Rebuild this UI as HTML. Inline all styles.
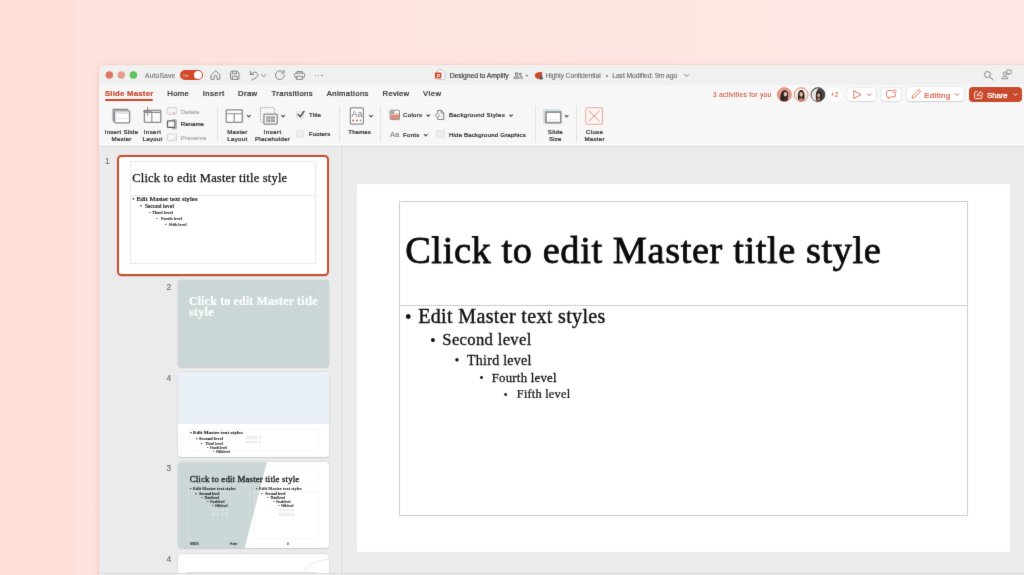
<!DOCTYPE html>
<html lang="en">
<head>
<meta charset="utf-8">
<title>Slide Master</title>
<style>
*{box-sizing:border-box;margin:0;padding:0}
html,body{width:1024px;height:575px;overflow:hidden}
#app{position:absolute;left:0;top:0;width:1024px;height:575px;overflow:hidden}
#fx{position:absolute;left:0;top:0;width:1100px;height:640px;filter:url(#soft)}
body{position:relative;font-family:"Liberation Sans",sans-serif;color:#2b2b2b;
 background:linear-gradient(90deg,#fee0d7 0,#fee0d8 75px,#fee2db 77px,#fee4df 50%,#fee8e8 100%);}
.a{position:absolute;display:block}
.t{position:absolute;white-space:nowrap;line-height:1;display:block;-webkit-text-stroke:0.22px}
.t:before{content:"";display:inline-block;width:0;height:60px}
</style>
</head>
<body>
<svg width="0" height="0" style="position:absolute" aria-hidden="true"><defs><filter id="soft" x="0" y="0" width="100%" height="100%" color-interpolation-filters="sRGB"><feConvolveMatrix order="3" kernelMatrix="0.0074 0.0713 0.0074 0.0713 0.6853 0.0713 0.0074 0.0713 0.0074" edgeMode="duplicate" preserveAlpha="false"/></filter></defs></svg>
<div id="app"><div id="fx">
<div class="a" style="left:98.60px;top:65.00px;width:940.00px;height:530.00px;background:#ebebeb;border-radius:6px 0 0 0;box-shadow:0 0 0 0.5px rgba(160,80,60,.10),0 1px 7px rgba(200,90,60,.16);"></div>
<div class="a" style="left:98.60px;top:65.00px;width:940.00px;height:20.20px;background:#f1f0f0;border-radius:6px 0 0 0;"></div>
<div class="a" style="left:98.60px;top:85.20px;width:940.00px;height:62.20px;background:#f8f7f7;border-bottom:1px solid #dcdbdb;"></div>
<div class="a" style="left:339.60px;top:147.40px;width:1.20px;height:430.00px;background:#f3f3f3;"></div>
<div class="a" style="left:340.80px;top:147.40px;width:0.90px;height:430.00px;background:#dddddd;"></div>
<svg class="a" style="left:104px;top:70px;" width="10" height="10" viewBox="0 0 10 10" fill="none"><g transform="translate(0.80 0.50)"><circle cx="4.5" cy="4.5" r="3.75" fill="#dd7660"/></g></svg>
<svg class="a" style="left:116px;top:70px;" width="10" height="10" viewBox="0 0 10 10" fill="none"><g transform="translate(0.80 0.50)"><circle cx="4.5" cy="4.5" r="3.75" fill="#e69f8b"/></g></svg>
<svg class="a" style="left:128px;top:70px;" width="10" height="10" viewBox="0 0 10 10" fill="none"><g transform="translate(0.90 0.50)"><circle cx="4.5" cy="4.5" r="3.75" fill="#5dc25b"/></g></svg>
<div class="t" style="left:145.10px;top:18.00px;font-size:6.80px;color:#707070;letter-spacing:0.102px;-webkit-text-stroke:0.100px;">AutoSave</div>
<div class="a" style="left:179.50px;top:70.40px;width:23.20px;height:9.60px;background:#d1492a;border-radius:5px;"></div>
<div class="a" style="left:193.90px;top:71.20px;width:8.00px;height:8.00px;background:#fff;border-radius:50%;"></div>
<div class="t" style="left:183.40px;top:17.00px;font-size:16.80px;color:#fbe9e4;transform-origin:0 60px;transform:scale(0.25);-webkit-text-stroke:0.000px;">On</div>
<div class="t" style="left:104.90px;top:36.00px;font-size:7.70px;color:#c8472b;font-family:'Liberation Sans',sans-serif;font-weight:700;letter-spacing:0.276px;">Slide Master</div>
<div class="a" style="left:104.90px;top:99.20px;width:48.40px;height:2.10px;background:#c8472b;border-radius:1px;"></div>
<div class="t" style="left:167.20px;top:36.00px;font-size:7.70px;color:#262626;letter-spacing:0.387px;">Home</div>
<div class="t" style="left:202.70px;top:36.00px;font-size:7.70px;color:#262626;letter-spacing:0.468px;">Insert</div>
<div class="t" style="left:237.90px;top:36.00px;font-size:7.70px;color:#262626;letter-spacing:0.444px;">Draw</div>
<div class="t" style="left:271.60px;top:36.00px;font-size:7.70px;color:#262626;letter-spacing:0.363px;">Transitions</div>
<div class="t" style="left:326.70px;top:36.00px;font-size:7.70px;color:#262626;letter-spacing:0.412px;">Animations</div>
<div class="t" style="left:382.60px;top:36.00px;font-size:7.70px;color:#262626;letter-spacing:0.231px;">Review</div>
<div class="t" style="left:423.00px;top:36.00px;font-size:7.70px;color:#262626;letter-spacing:0.483px;">View</div>
<div class="a" style="left:356.60px;top:183.90px;width:653.80px;height:368.50px;background:#fff;border-radius:1.5px;"></div>
<div class="a" style="left:399.20px;top:201.30px;width:569.20px;height:315.20px;border:1px solid #e6e6e6;"></div>
<div class="a" style="left:399.20px;top:201.30px;width:569.20px;height:315.20px;border:1px dotted #b2b2b2;"></div>
<div class="a" style="left:399.20px;top:304.90px;width:569.20px;height:1.00px;border-top:1px solid #e6e6e6;"></div>
<div class="a" style="left:399.20px;top:304.90px;width:569.20px;height:1.00px;border-top:1px dotted #b2b2b2;"></div>
<div class="t" style="left:405.20px;top:203.00px;font-size:38.35px;color:#0a0a0a;font-family:'Liberation Serif',serif;font-weight:400;letter-spacing:0.614px;-webkit-text-stroke:0.767px;">Click to edit Master title style</div>
<div class="t" style="left:104.70px;top:74.00px;font-size:6.10px;color:#2a2a2a;letter-spacing:0.262px;">Insert Slide</div>
<div class="t" style="left:111.40px;top:81.00px;font-size:6.10px;color:#2a2a2a;letter-spacing:0.271px;">Master</div>
<div class="t" style="left:143.75px;top:74.00px;font-size:6.10px;color:#2a2a2a;letter-spacing:0.409px;">Insert</div>
<div class="t" style="left:142.55px;top:81.00px;font-size:6.10px;color:#2a2a2a;letter-spacing:0.277px;">Layout</div>
<div class="t" style="left:180.70px;top:54.00px;font-size:6.10px;color:#a9a9a9;letter-spacing:0.213px;">Delete</div>
<div class="t" style="left:180.70px;top:66.00px;font-size:6.10px;color:#2a2a2a;letter-spacing:0.049px;">Rename</div>
<div class="t" style="left:180.70px;top:80.00px;font-size:6.10px;color:#a9a9a9;letter-spacing:0.184px;">Preserve</div>
<div class="a" style="left:217.20px;top:106.00px;width:1.00px;height:35.50px;background:#e5e4e4;"></div>
<div class="t" style="left:227.30px;top:74.00px;font-size:6.10px;color:#2a2a2a;letter-spacing:0.251px;">Master</div>
<div class="t" style="left:227.30px;top:81.00px;font-size:6.10px;color:#2a2a2a;letter-spacing:0.317px;">Layout</div>
<div class="t" style="left:263.85px;top:74.00px;font-size:6.10px;color:#2a2a2a;letter-spacing:0.409px;">Insert</div>
<div class="t" style="left:254.95px;top:81.00px;font-size:6.10px;color:#2a2a2a;letter-spacing:0.288px;">Placeholder</div>
<div class="t" style="left:309.10px;top:57.00px;font-size:6.10px;color:#2a2a2a;letter-spacing:0.101px;">Title</div>
<div class="t" style="left:309.10px;top:76.00px;font-size:6.10px;color:#2a2a2a;letter-spacing:0.070px;">Footers</div>
<div class="a" style="left:339.00px;top:106.00px;width:1.00px;height:35.50px;background:#e5e4e4;"></div>
<div class="t" style="left:348.30px;top:74.00px;font-size:6.10px;color:#2a2a2a;letter-spacing:0.113px;">Themes</div>
<div class="a" style="left:380.00px;top:106.00px;width:1.00px;height:35.50px;background:#e5e4e4;"></div>
<div class="t" style="left:403.00px;top:57.00px;font-size:6.10px;color:#2a2a2a;letter-spacing:0.295px;">Colors</div>
<div class="t" style="left:449.00px;top:57.00px;font-size:6.10px;color:#2a2a2a;letter-spacing:0.309px;">Background Styles</div>
<div class="t" style="left:389.90px;top:77.00px;font-size:7.69px;color:#8a8a8a;">Aa</div>
<div class="t" style="left:403.00px;top:77.00px;font-size:6.10px;color:#2a2a2a;letter-spacing:0.286px;">Fonts</div>
<div class="t" style="left:449.00px;top:77.00px;font-size:6.10px;color:#2a2a2a;letter-spacing:0.174px;">Hide Background Graphics</div>
<div class="a" style="left:534.50px;top:106.00px;width:1.00px;height:35.50px;background:#e5e4e4;"></div>
<div class="t" style="left:547.85px;top:74.00px;font-size:6.10px;color:#2a2a2a;letter-spacing:0.334px;">Slide</div>
<div class="t" style="left:549.10px;top:81.00px;font-size:6.10px;color:#2a2a2a;letter-spacing:0.178px;">Size</div>
<div class="a" style="left:576.00px;top:106.00px;width:1.00px;height:35.50px;background:#e5e4e4;"></div>
<div class="t" style="left:586.10px;top:74.00px;font-size:6.10px;color:#2a2a2a;letter-spacing:0.276px;">Close</div>
<div class="t" style="left:584.40px;top:81.00px;font-size:6.10px;color:#2a2a2a;letter-spacing:0.291px;">Master</div>
<div class="t" style="left:449.70px;top:18.00px;font-size:6.80px;color:#2a2a2a;letter-spacing:-0.061px;-webkit-text-stroke:0.100px;">Designed to Amplify</div>
<div class="t" style="left:545.40px;top:18.00px;font-size:6.80px;color:#6a6a6a;letter-spacing:-0.078px;-webkit-text-stroke:0.100px;">Highly Confidential</div>
<div class="t" style="left:612.20px;top:18.00px;font-size:6.80px;color:#6a6a6a;letter-spacing:-0.090px;-webkit-text-stroke:0.100px;">Last Modified: 9m ago</div>
<svg class="a" style="left:525px;top:74px;" width="4" height="4" viewBox="0 0 4 4" fill="none"><g transform="translate(0.40 0.20)"><circle cx="1.5" cy="1.5" r="0.9" fill="#777"/></g></svg>
<svg class="a" style="left:605px;top:74px;" width="4" height="4" viewBox="0 0 4 4" fill="none"><g transform="translate(0.50 0.40)"><circle cx="1.5" cy="1.5" r="1" fill="#777"/></g></svg>
<div class="t" style="left:712.80px;top:37.00px;font-size:6.90px;color:#cf5439;letter-spacing:0.183px;-webkit-text-stroke:0.080px;">3 activities for you</div>
<svg class="a" style="left:210px;top:69px;" width="12" height="12" viewBox="0 0 12 12" fill="none"><g transform="translate(0.40 0.70)"><path d="M1 5.2 L5.2 1 L9.4 5.2 V9.6 H6.6 V6.9 a1.4 1.4 0 0 0 -2.8 0 V9.6 H1 Z" stroke="#838383" stroke-width="1.0" stroke-linecap="round" stroke-linejoin="round"/></g></svg>
<svg class="a" style="left:229px;top:70px;" width="12" height="12" viewBox="0 0 12 12" fill="none"><g transform="translate(0.60 0.20)"><path d="M1 2 a1 1 0 0 1 1 -1 H7.6 L9.4 2.8 V8.2 a1 1 0 0 1 -1 1 H2 a1 1 0 0 1 -1 -1 Z M3 1 V3.6 H7 V1 M2.8 9.2 V6 H7.6 V9.2" stroke="#838383" stroke-width="1.0" stroke-linecap="round" stroke-linejoin="round"/></g></svg>
<svg class="a" style="left:249px;top:69px;" width="11" height="12" viewBox="0 0 11 12" fill="none"><g transform="translate(0.40 0.90)"><path d="M1 1.2 V4.6 H4.4 M1.2 4.4 C3 2.2 6 1.6 7.6 3.2 C9.2 4.8 8.4 6.6 6.6 7.8 L2.2 10.2" stroke="#838383" stroke-width="1.0" stroke-linecap="round" stroke-linejoin="round"/></g></svg>
<svg class="a" style="left:260px;top:73px;" width="7" height="6" viewBox="0 0 7 6" fill="none"><g transform="translate(0.60 0.40)"><path d="M0.8 1 L3 3.4 L5.2 1" stroke="#838383" stroke-width="1.0" stroke-linecap="round" stroke-linejoin="round"/></g></svg>
<svg class="a" style="left:274px;top:69px;" width="13" height="13" viewBox="0 0 13 13" fill="none"><g transform="translate(0.40 0.50)"><path d="M9.9 5.6 A4.4 4.4 0 1 1 8.3 2.2 M9.6 0.9 V3.6 H6.9" stroke="#838383" stroke-width="1.0" stroke-linecap="round" stroke-linejoin="round"/></g></svg>
<svg class="a" style="left:293px;top:70px;" width="13" height="11" viewBox="0 0 13 11" fill="none"><g transform="translate(0.80 0.60)"><path d="M3 2.6 V1 H8.6 V2.6 M3 7 H2.2 A1.4 1.4 0 0 1 0.8 5.6 V4 A1.4 1.4 0 0 1 2.2 2.6 H9.4 A1.4 1.4 0 0 1 10.8 4 V5.6 A1.4 1.4 0 0 1 9.4 7 H8.6 M3 5.6 H8.6 V8.8 H3 Z" stroke="#838383" stroke-width="1.0" stroke-linecap="round" stroke-linejoin="round"/></g></svg>
<div class="a" style="left:314.65px;top:74.50px;width:1.50px;height:1.50px;background:#838383;border-radius:50%;"></div>
<div class="a" style="left:317.95px;top:74.50px;width:1.50px;height:1.50px;background:#838383;border-radius:50%;"></div>
<div class="a" style="left:321.25px;top:74.50px;width:1.50px;height:1.50px;background:#838383;border-radius:50%;"></div>
<svg class="a" style="left:112px;top:108px;" width="20" height="17" viewBox="0 0 20 17" fill="none"><g transform="translate(0.00 0.00)"><path d="M1.2 13.4 V1.4 H16.2" stroke="#8a8a8a" stroke-width="1.3"/><rect x="2.6" y="2.8" width="15" height="12" rx="0.8" fill="#fff" stroke="#8a8a8a" stroke-width="1.3"/><rect x="3.4" y="3.6" width="13.4" height="2.4" fill="#dfe7ee"/><path d="M4.4 10.6 H15.8" stroke="#bfc6cc" stroke-width="0.9" stroke-dasharray="1 0.8"/></g></svg>
<svg class="a" style="left:142px;top:106px;" width="21" height="19" viewBox="0 0 21 19" fill="none"><g transform="translate(0.40 0.00)"><rect x="2" y="4.4" width="16.4" height="12" rx="0.6" fill="#fafafa" stroke="#8a8a8a" stroke-width="1.3"/><path d="M9.4 6.6 V16 M2.4 6.4 H18" stroke="#8a8a8a" stroke-width="1.1"/><path d="M5.2 0.8 V9.6 M0.8 5.2 H9.6" stroke="#7a7a7a" stroke-width="0.9"/></g></svg>
<svg class="a" style="left:166px;top:106px;" width="12" height="10" viewBox="0 0 12 10" fill="none"><g transform="translate(0.60 0.90)"><rect x="0.8" y="0.8" width="9" height="6.6" rx="0.6" stroke="#cfcfcf" stroke-width="1"/><path d="M6.4 5 L8.6 7.4 M8.6 5 L6.4 7.4" stroke="#e3b0a4" stroke-width="0.8"/><path d="M2 5.4 H5" stroke="#d6d6d6" stroke-width="0.8"/></g></svg>
<svg class="a" style="left:166px;top:119px;" width="12" height="12" viewBox="0 0 12 12" fill="none"><g transform="translate(0.60 0.20)"><rect x="0.9" y="1.6" width="7.4" height="6.6" rx="0.5" stroke="#5f5f5f" stroke-width="1.2"/><path d="M5.6 0.7 H9.6 V9.6 H5.6" stroke="#8d8d8d" stroke-width="0.9"/></g></svg>
<svg class="a" style="left:166px;top:133px;" width="12" height="10" viewBox="0 0 12 10" fill="none"><g transform="translate(0.60 0.20)"><rect x="0.8" y="0.8" width="9" height="6.6" rx="0.6" stroke="#cfcfcf" stroke-width="1"/><path d="M5 5.6 L6.4 7 L9.2 3.6" stroke="#d9d9d9" stroke-width="0.8"/></g></svg>
<svg class="a" style="left:225px;top:108px;" width="20" height="16" viewBox="0 0 20 16" fill="none"><g transform="translate(0.00 0.70)"><rect x="1.2" y="1.2" width="16.2" height="12.4" rx="0.6" fill="#fcfcfc" stroke="#8a8a8a" stroke-width="1.3"/><path d="M1.4 5 H17.2 M9.2 5 V13.4" stroke="#8a8a8a" stroke-width="1.1"/></g></svg>
<svg class="a" style="left:246px;top:114px;" width="6" height="5" viewBox="0 0 6 5" fill="none"><g transform="translate(0.35 0.30)"><path d="M1 1 L2.45 2.60 L3.90 1" stroke="#444" stroke-width="1.05" stroke-linecap="round" stroke-linejoin="round"/></g></svg>
<svg class="a" style="left:259px;top:106px;" width="20" height="20" viewBox="0 0 20 20" fill="none"><g transform="translate(0.60 0.70)"><rect x="0.9" y="0.9" width="14" height="14" rx="1" stroke="#90979b" stroke-width="0.9" stroke-dasharray="1.6 1.1"/><rect x="4.3" y="7.4" width="13.4" height="10" rx="0.8" fill="#f4f4f4" stroke="#8a8a8a" stroke-width="1.3"/><rect x="6.6" y="9.6" width="8.8" height="5.8" fill="#a4a4a4"/><path d="M11 9.6 V15.4 M6.6 12.5 H15.4" stroke="#d8d8d8" stroke-width="0.7"/></g></svg>
<svg class="a" style="left:280px;top:114px;" width="6" height="5" viewBox="0 0 6 5" fill="none"><g transform="translate(0.65 0.30)"><path d="M1 1 L2.45 2.60 L3.90 1" stroke="#444" stroke-width="1.05" stroke-linecap="round" stroke-linejoin="round"/></g></svg>
<div class="a" style="left:295.90px;top:111.10px;width:8.40px;height:7.60px;background:#eeeded;border-radius:1.8px;box-shadow:inset 0 0 0 0.6px #dedede;"></div>
<svg class="a" style="left:295px;top:109px;" width="12" height="12" viewBox="0 0 12 12" fill="none"><g transform="translate(0.90 0.10)"><path d="M2.1 5.3 L4.4 7.5 L8.1 2.2" stroke="#2e2e2e" stroke-width="1.15" stroke-linecap="round" stroke-linejoin="round"/></g></svg>
<div class="a" style="left:295.90px;top:130.00px;width:8.40px;height:7.60px;background:#eeeded;border-radius:1.8px;box-shadow:inset 0 0 0 0.6px #dedede;"></div>
<div class="a" style="left:436.30px;top:130.20px;width:8.40px;height:7.60px;background:#eeeded;border-radius:1.8px;box-shadow:inset 0 0 0 0.6px #dedede;"></div>
<svg class="a" style="left:349px;top:107px;" width="16" height="19" viewBox="0 0 16 19" fill="none"><g transform="translate(0.50 0.00)"><rect x="0.9" y="0.9" width="13" height="16.2" rx="1.2" fill="#fdfdfd" stroke="#8a8a8a" stroke-width="1.2"/><circle cx="3.6" cy="13.5" r="1" fill="#d5553a"/><circle cx="7.4" cy="13.5" r="1" fill="#d5553a"/><circle cx="11" cy="13.5" r="0.9" fill="#8d8d8d"/></g></svg>
<div class="t" style="left:351.60px;top:57.00px;font-size:8.80px;color:#767676;-webkit-text-stroke:0.000px;">Aa</div>
<svg class="a" style="left:368px;top:114px;" width="6" height="5" viewBox="0 0 6 5" fill="none"><g transform="translate(0.55 0.40)"><path d="M1 1 L2.45 2.60 L3.90 1" stroke="#444" stroke-width="1.05" stroke-linecap="round" stroke-linejoin="round"/></g></svg>
<svg class="a" style="left:389px;top:109px;" width="12" height="12" viewBox="0 0 12 12" fill="none"><g transform="translate(0.40 0.50)"><rect x="0.7" y="0.7" width="9.4" height="9.4" rx="0.8" fill="#fff" stroke="#8a8a8a" stroke-width="1"/><rect x="1.2" y="1.2" width="3.8" height="3.8" fill="#a9a9a9"/><rect x="1.2" y="5.2" width="8.4" height="4.4" fill="#e18b78"/><rect x="5.4" y="3.6" width="4.2" height="1.6" fill="#e18b78" opacity=".5"/></g></svg>
<svg class="a" style="left:425px;top:113px;" width="6" height="5" viewBox="0 0 6 5" fill="none"><g transform="translate(0.85 0.80)"><path d="M1 1 L2.45 2.60 L3.90 1" stroke="#444" stroke-width="1.05" stroke-linecap="round" stroke-linejoin="round"/></g></svg>
<svg class="a" style="left:423px;top:133px;" width="6" height="5" viewBox="0 0 6 5" fill="none"><g transform="translate(0.25 0.40)"><path d="M1 1 L2.45 2.60 L3.90 1" stroke="#444" stroke-width="1.05" stroke-linecap="round" stroke-linejoin="round"/></g></svg>
<svg class="a" style="left:434px;top:109px;" width="12" height="12" viewBox="0 0 12 12" fill="none"><g transform="translate(0.60 0.40)"><path d="M3 3.4 V1 H6.8 L9.2 3.4 V10 H3 V8" stroke="#6f6f6f" stroke-width="0.9" stroke-linejoin="round"/><path d="M6.6 1 V3.6 H9.2" stroke="#6f6f6f" stroke-width="0.8"/><path d="M2.8 3.6 L5 5.8 L2.8 8 L0.7 5.8 Z" stroke="#6f6f6f" stroke-width="0.8" stroke-linejoin="round"/><circle cx="6.4" cy="7.2" r="0.7" fill="#9db7cc"/></g></svg>
<svg class="a" style="left:508px;top:113px;" width="6" height="5" viewBox="0 0 6 5" fill="none"><g transform="translate(0.55 0.80)"><path d="M1 1 L2.45 2.60 L3.90 1" stroke="#444" stroke-width="1.05" stroke-linecap="round" stroke-linejoin="round"/></g></svg>
<svg class="a" style="left:542px;top:108px;" width="21" height="17" viewBox="0 0 21 17" fill="none"><g transform="translate(0.60 0.80)"><rect x="0.5" y="0.5" width="17.8" height="14" fill="#cfdde3"/><rect x="3.4" y="3.3" width="14.8" height="10.6" fill="#fff" stroke="#8e8e8e" stroke-width="1.7"/><path d="M5.6 11 H16" stroke="#cfcfcf" stroke-width="0.7" stroke-dasharray="1 0.8"/></g></svg>
<svg class="a" style="left:564px;top:114px;" width="6" height="5" viewBox="0 0 6 5" fill="none"><g transform="translate(0.15 0.30)"><path d="M1 1 L2.45 2.60 L3.90 1" stroke="#444" stroke-width="1.05" stroke-linecap="round" stroke-linejoin="round"/></g></svg>
<svg class="a" style="left:584px;top:106px;" width="20" height="20" viewBox="0 0 20 20" fill="none"><g transform="translate(0.80 0.80)"><rect x="0.9" y="0.9" width="16.8" height="16.6" rx="1.4" fill="#fdf6f4" stroke="#eaa797" stroke-width="1"/><path d="M3.8 3.8 L14.8 14.6 M14.8 3.8 L3.8 14.6" stroke="#d67c68" stroke-width="0.8"/></g></svg>
<svg class="a" style="left:434px;top:69px;" width="13" height="12" viewBox="0 0 13 12" fill="none"><g transform="translate(0.40 0.20)"><path d="M3 1.6 a1 1 0 0 1 1 -1 H7.8 L10.6 3.4 V9.4 a1 1 0 0 1 -1 1 H4 a1 1 0 0 1 -1 -1 Z" fill="#fbfbfb" stroke="#b9b9b9" stroke-width="0.8"/><rect x="0.5" y="3.3" width="6.5" height="5.9" rx="0.8" fill="#d24a2b"/></g></svg>
<svg class="a" style="left:513px;top:72px;" width="11" height="8" viewBox="0 0 11 8" fill="none"><g transform="translate(0.40 0.00)"><circle cx="3.2" cy="1.9" r="1.3" stroke="#606060" stroke-width="0.95"/><path d="M0.7 6.2 C0.7 3.6 5.7 3.6 5.7 6.2 Z" stroke="#606060" stroke-width="0.95" stroke-linejoin="round"/><circle cx="6.9" cy="2.2" r="1" stroke="#606060" stroke-width="0.85"/><path d="M6.6 4.3 C8 4 9 4.8 9 6.2 H7" stroke="#606060" stroke-width="0.85"/></g></svg>
<svg class="a" style="left:533px;top:71px;" width="11" height="10" viewBox="0 0 11 10" fill="none"><g transform="translate(0.80 0.00)"><path d="M1 3.6 C2.4 1.2 5.4 0.4 8.4 1.4 C8.8 4.6 6.8 7.2 3.8 8 C1.6 7 0.6 5.4 1 3.6 Z" fill="#cf4a2c"/><rect x="5.6" y="5.4" width="3.4" height="3" rx="0.6" fill="#555"/><path d="M6.4 5.4 V4.8 a0.9 0.9 0 0 1 1.8 0 V5.4" stroke="#555" stroke-width="0.6"/></g></svg>
<svg class="a" style="left:683px;top:73px;" width="7" height="5" viewBox="0 0 7 5" fill="none"><g transform="translate(0.60 0.60)"><path d="M1 1 L2.90 3.00 L4.80 1" stroke="#777" stroke-width="0.9" stroke-linecap="round" stroke-linejoin="round"/></g></svg>
<svg class="a" style="left:983px;top:70px;" width="13" height="12" viewBox="0 0 13 12" fill="none"><g transform="translate(0.00 0.00)"><circle cx="4.4" cy="4.5" r="3" stroke="#777" stroke-width="0.9"/><path d="M6.7 6.8 L10 9.8" stroke="#777" stroke-width="1" stroke-linecap="round"/></g></svg>
<svg class="a" style="left:1001px;top:69px;" width="13" height="12" viewBox="0 0 13 12" fill="none"><g transform="translate(0.00 0.30)"><circle cx="3.8" cy="4.3" r="1.6" stroke="#777" stroke-width="0.8"/><path d="M0.9 9.4 C0.9 6.2 6.8 6.2 6.8 9.4 Z" stroke="#777" stroke-width="0.8" stroke-linejoin="round"/><rect x="5.8" y="0.7" width="4.6" height="3.8" rx="1.1" stroke="#777" stroke-width="0.8"/><path d="M7 4.5 L6.6 5.8 L8.2 4.5" stroke="#777" stroke-width="0.6"/></g></svg>
<svg class="a" style="left:777px;top:87px;" width="16" height="16" viewBox="0 0 16 16" fill="none"><g transform="translate(0.00 0.20)"><circle cx="7.4" cy="7.4" r="6.9" fill="#e9a08e" stroke="#de7a64" stroke-width="0.9"/><path d="M3.4 13 C3 8 4 3.4 7.6 3 C11 3 11.6 7 11.2 9 C10.8 11.4 10 12.6 9.4 13.6 C7.4 14.6 5 14.2 3.4 13 Z" fill="#2b2523"/><ellipse cx="8.4" cy="7" rx="1.7" ry="2.2" fill="#e9c3b2"/><path d="M6.6 10 L10.4 10 L11 13 L6 13.8 Z" fill="#3a302d"/></g></svg>
<svg class="a" style="left:793px;top:87px;" width="16" height="16" viewBox="0 0 16 16" fill="none"><g transform="translate(0.80 0.20)"><circle cx="7.4" cy="7.4" r="6.9" fill="#f5ece8" stroke="#de7a64" stroke-width="0.9"/><path d="M4.4 12.6 C3.4 8 4.4 3 7.4 2.8 C10.6 3 11.4 8 10.4 12.6 C8.6 14 6.2 14 4.4 12.6 Z" fill="#2a2422"/><ellipse cx="7.4" cy="7.2" rx="1.7" ry="2.3" fill="#e6b9a6"/><path d="M5.6 11 H9.2 L9.8 13.6 H5 Z" fill="#d9826b"/></g></svg>
<svg class="a" style="left:810px;top:87px;" width="16" height="16" viewBox="0 0 16 16" fill="none"><g transform="translate(0.50 0.20)"><circle cx="7.4" cy="7.4" r="6.9" fill="#4a4644" stroke="#3a3a3a" stroke-width="0.9"/><path d="M1 8 C1 3 5 1 8 1 C5 4 5 10 6 14 C3 13 1 11 1 8 Z" fill="#e8e4e1"/><path d="M6 5 C8 3.4 11 4 11.4 7 C11.6 10 10.6 12.4 9.4 13.6 L6.4 13.8 C5.4 11 5.2 7 6 5 Z" fill="#2a2625"/><ellipse cx="8.2" cy="8" rx="1.5" ry="2" fill="#d9a08c"/><rect x="6.8" y="10.6" width="2.6" height="3" fill="#d46a52"/></g></svg>
<div class="a" style="left:827.30px;top:87.40px;width:14.40px;height:14.40px;background:#fff;border-radius:50%;box-shadow:0 0 0 0.5px rgba(0,0,0,.05);"></div>
<div class="t" style="left:830.80px;top:37.00px;font-size:6.67px;color:#d6674e;-webkit-text-stroke:0.100px;">+2</div>
<div class="a" style="left:846.80px;top:87.50px;width:29.20px;height:13.70px;background:#fff;border-radius:3.5px;box-shadow:0 0 0 0.6px rgba(0,0,0,.07),0 0.6px 1.4px rgba(0,0,0,.14);"></div>
<svg class="a" style="left:852px;top:89px;" width="11" height="12" viewBox="0 0 11 12" fill="none"><g transform="translate(0.40 0.20)"><path d="M1.4 1.4 L8.6 5.4 L1.4 9.4 Z" stroke="#d9674d" stroke-width="0.9" stroke-linejoin="round"/></g></svg>
<svg class="a" style="left:866px;top:93px;" width="7" height="5" viewBox="0 0 7 5" fill="none"><g transform="translate(0.80 0.05)"><path d="M1 1 L2.60 2.70 L4.20 1" stroke="#c8553c" stroke-width="0.9" stroke-linecap="round" stroke-linejoin="round"/></g></svg>
<div class="a" style="left:881.40px;top:87.50px;width:19.90px;height:13.70px;background:#fff;border-radius:3.5px;box-shadow:0 0 0 0.6px rgba(0,0,0,.07),0 0.6px 1.4px rgba(0,0,0,.14);"></div>
<svg class="a" style="left:885px;top:89px;" width="13" height="12" viewBox="0 0 13 12" fill="none"><g transform="translate(0.60 0.00)"><path d="M6.4 1.6 H2 a1 1 0 0 0 -1 1 V6.8 a1 1 0 0 0 1 1 H2.6 V10 L5.2 7.8 H8.8 a1 1 0 0 0 1 -1 V5" stroke="#d9674d" stroke-width="0.9" stroke-linejoin="round" stroke-linecap="round"/><circle cx="8.9" cy="2.3" r="1.5" stroke="#d9674d" stroke-width="0.8"/></g></svg>
<div class="a" style="left:907.00px;top:87.40px;width:56.70px;height:14.00px;background:#fff;border-radius:3.5px;box-shadow:0 0 0 0.6px rgba(0,0,0,.07),0 0.6px 1.4px rgba(0,0,0,.14);"></div>
<svg class="a" style="left:910px;top:88px;" width="12" height="12" viewBox="0 0 12 12" fill="none"><g transform="translate(0.60 0.60)"><path d="M1.4 9.6 L2 7.2 L7.6 1.6 a1.1 1.1 0 0 1 1.6 0 L9.4 1.8 a1.1 1.1 0 0 1 0 1.6 L3.8 9 Z" stroke="#d9674d" stroke-width="0.9" stroke-linejoin="round"/></g></svg>
<svg class="a" style="left:954px;top:92px;" width="7" height="5" viewBox="0 0 7 5" fill="none"><g transform="translate(0.20 0.70)"><path d="M1 1 L2.80 2.80 L4.60 1" stroke="#c8553c" stroke-width="0.9" stroke-linecap="round" stroke-linejoin="round"/></g></svg>
<div class="a" style="left:969.10px;top:87.00px;width:53.40px;height:14.50px;background:#c8492b;border-radius:4px;"></div>
<svg class="a" style="left:973px;top:89px;" width="12" height="11" viewBox="0 0 12 11" fill="none"><g transform="translate(0.60 0.60)"><path d="M3.6 2 H2 a1 1 0 0 0 -1 1 V8 a1 1 0 0 0 1 1 H7.6 a1 1 0 0 0 1 -1 V7.2" stroke="#fff" stroke-width="0.9" stroke-linecap="round"/><path d="M3.4 6.6 C3.6 4.4 5 3.4 6.6 3.4 V1.6 L9.6 4.4 L6.6 7 V5.4 C5.2 5.3 4.2 5.7 3.4 6.6 Z" stroke="#fff" stroke-width="0.8" stroke-linejoin="round"/></g></svg>
<div class="t" style="left:987.00px;top:38.00px;font-size:7.90px;color:#fff;letter-spacing:-0.095px;-webkit-text-stroke:0.260px;">Share</div>
<svg class="a" style="left:1012px;top:92px;" width="7" height="5" viewBox="0 0 7 5" fill="none"><g transform="translate(0.70 0.75)"><path d="M1 1 L2.70 2.70 L4.40 1" stroke="#fff" stroke-width="0.9" stroke-linecap="round" stroke-linejoin="round"/></g></svg>
<div class="t" style="left:924.20px;top:38.00px;font-size:7.90px;color:#d0583c;letter-spacing:0.307px;-webkit-text-stroke:0.200px;">Editing</div>
<div class="t" style="left:418.20px;top:263.00px;font-size:20.04px;color:#111;font-family:'Liberation Serif',serif;font-weight:400;letter-spacing:0.341px;-webkit-text-stroke:0.401px;">Edit Master text styles</div>
<div class="t" style="left:404.79px;top:264.00px;font-size:20.04px;color:#111;font-family:'Liberation Serif',serif;font-weight:400;-webkit-text-stroke:0.000px;">•</div>
<div class="t" style="left:442.30px;top:285.00px;font-size:16.65px;color:#111;font-family:'Liberation Serif',serif;font-weight:400;letter-spacing:0.324px;-webkit-text-stroke:0.333px;">Second level</div>
<div class="t" style="left:430.09px;top:286.00px;font-size:16.65px;color:#111;font-family:'Liberation Serif',serif;font-weight:400;-webkit-text-stroke:0.000px;">•</div>
<div class="t" style="left:467.00px;top:305.00px;font-size:14.00px;color:#111;font-family:'Liberation Serif',serif;font-weight:400;letter-spacing:0.258px;-webkit-text-stroke:0.280px;">Third level</div>
<div class="t" style="left:454.45px;top:305.00px;font-size:14.00px;color:#111;font-family:'Liberation Serif',serif;font-weight:400;-webkit-text-stroke:0.000px;">•</div>
<div class="t" style="left:491.70px;top:322.00px;font-size:12.82px;color:#111;font-family:'Liberation Serif',serif;font-weight:400;letter-spacing:0.236px;-webkit-text-stroke:0.256px;">Fourth level</div>
<div class="t" style="left:479.16px;top:322.00px;font-size:12.82px;color:#111;font-family:'Liberation Serif',serif;font-weight:400;-webkit-text-stroke:0.000px;">•</div>
<div class="t" style="left:516.80px;top:338.00px;font-size:12.36px;color:#111;font-family:'Liberation Serif',serif;font-weight:400;letter-spacing:0.213px;-webkit-text-stroke:0.247px;">Fifth level</div>
<div class="t" style="left:503.44px;top:339.00px;font-size:12.36px;color:#111;font-family:'Liberation Serif',serif;font-weight:400;-webkit-text-stroke:0.000px;">•</div>
<div class="t" style="left:105.00px;top:104.00px;font-size:8.40px;color:#6a6a6a;-webkit-text-stroke:0.120px;">1</div>
<div class="t" style="left:166.60px;top:230.00px;font-size:8.40px;color:#6a6a6a;-webkit-text-stroke:0.120px;">2</div>
<div class="t" style="left:166.60px;top:321.00px;font-size:8.40px;color:#6a6a6a;-webkit-text-stroke:0.120px;">4</div>
<div class="t" style="left:166.60px;top:411.00px;font-size:8.40px;color:#6a6a6a;-webkit-text-stroke:0.120px;">3</div>
<div class="t" style="left:166.60px;top:502.00px;font-size:8.40px;color:#6a6a6a;-webkit-text-stroke:0.120px;">4</div>
<div class="a" style="left:116.90px;top:155.40px;width:212.20px;height:120.50px;background:#fff;border-radius:4.5px;border:2px solid #c94d2d;box-shadow:0 0.5px 1.5px rgba(0,0,0,.10);"></div>
<div class="a" style="left:130.20px;top:161.40px;width:185.40px;height:102.60px;border:1px dotted #d2d2d2;"></div>
<div class="a" style="left:130.20px;top:194.80px;width:185.40px;height:1.00px;border-top:1px dotted #d2d2d2;"></div>
<div class="t" style="left:132.20px;top:122.00px;font-size:12.49px;color:#111;font-family:'Liberation Serif',serif;font-weight:400;letter-spacing:0.200px;-webkit-text-stroke:0.250px;">Click to edit Master title style</div>
<div class="t" style="left:136.40px;top:141.00px;font-size:6.54px;color:#111;font-family:'Liberation Serif',serif;font-weight:400;letter-spacing:0.111px;-webkit-text-stroke:0.222px;">Edit Master text styles</div>
<div class="t" style="left:132.26px;top:141.00px;font-size:6.54px;color:#111;font-family:'Liberation Serif',serif;font-weight:400;-webkit-text-stroke:0.150px;">•</div>
<div class="t" style="left:144.60px;top:148.20px;font-size:21.60px;color:#111;transform-origin:0 60px;transform:scale(0.25);font-family:'Liberation Serif',serif;font-weight:400;letter-spacing:0.420px;-webkit-text-stroke:0.736px;">Second level</div>
<div class="t" style="left:140.15px;top:148.42px;font-size:21.60px;color:#111;transform-origin:0 60px;transform:scale(0.25);font-family:'Liberation Serif',serif;font-weight:400;-webkit-text-stroke:0.600px;">•</div>
<div class="t" style="left:152.40px;top:154.10px;font-size:18.35px;color:#111;transform-origin:0 60px;transform:scale(0.25);font-family:'Liberation Serif',serif;font-weight:400;letter-spacing:0.338px;-webkit-text-stroke:0.624px;">Third level</div>
<div class="t" style="left:148.50px;top:154.28px;font-size:18.35px;color:#111;transform-origin:0 60px;transform:scale(0.25);font-family:'Liberation Serif',serif;font-weight:400;-webkit-text-stroke:0.600px;">•</div>
<div class="t" style="left:160.60px;top:160.00px;font-size:17.20px;color:#111;transform-origin:0 60px;transform:scale(0.25);font-family:'Liberation Serif',serif;font-weight:400;letter-spacing:0.073px;-webkit-text-stroke:0.480px;">Fourth level</div>
<div class="t" style="left:156.25px;top:160.17px;font-size:17.20px;color:#111;transform-origin:0 60px;transform:scale(0.25);font-family:'Liberation Serif',serif;font-weight:400;-webkit-text-stroke:0.600px;">•</div>
<div class="t" style="left:168.60px;top:165.60px;font-size:17.20px;color:#111;transform-origin:0 60px;transform:scale(0.25);font-family:'Liberation Serif',serif;font-weight:400;letter-spacing:-0.078px;-webkit-text-stroke:0.480px;">Fifth level</div>
<div class="t" style="left:164.55px;top:165.77px;font-size:17.20px;color:#111;transform-origin:0 60px;transform:scale(0.25);font-family:'Liberation Serif',serif;font-weight:400;-webkit-text-stroke:0.600px;">•</div>
<div class="a" style="left:177.90px;top:280.30px;width:151.60px;height:87.00px;background:#cbd6d6;border-radius:3.5px;box-shadow:0 0 0 0.5px rgba(0,0,0,.07),0 0.5px 1.2px rgba(0,0,0,.10);"></div>
<div class="a" style="left:188.10px;top:288.20px;width:131.00px;height:29.80px;border-top:1px dotted rgba(255,255,255,.22);border-right:1px dotted rgba(255,255,255,.22);"></div>
<div class="t" style="left:189.00px;top:245.00px;font-size:11.85px;color:#fdfefe;font-family:'Liberation Serif',serif;font-weight:700;letter-spacing:0.206px;-webkit-text-stroke:0.220px;">Click to edit Master title</div>
<div class="t" style="left:189.00px;top:256.00px;font-size:12.15px;color:#fdfefe;font-family:'Liberation Serif',serif;font-weight:700;letter-spacing:0.246px;-webkit-text-stroke:0.220px;">style</div>
<div class="a" style="left:177.90px;top:371.70px;width:151.60px;height:85.60px;background:#fff;border-radius:3.5px;box-shadow:0 0 0 0.5px rgba(0,0,0,.07),0 0.5px 1.2px rgba(0,0,0,.10);overflow:hidden;"></div>
<div class="a" style="left:177.90px;top:371.70px;width:151.60px;height:52.20px;background:#e9f0f8;border-radius:3.5px 3.5px 0 0;"></div>
<div class="a" style="left:189.00px;top:428.60px;width:129.70px;height:22.50px;border:1px dotted #ededed;"></div>
<div class="t" style="left:193.40px;top:373.90px;font-size:19.92px;color:#111;transform-origin:0 60px;transform:scale(0.25);font-family:'Liberation Serif',serif;font-weight:700;letter-spacing:0.361px;-webkit-text-stroke:0.400px;">Edit Master text styles</div>
<div class="t" style="left:190.43px;top:374.10px;font-size:19.92px;color:#111;transform-origin:0 60px;transform:scale(0.25);font-family:'Liberation Serif',serif;font-weight:700;-webkit-text-stroke:0.600px;">•</div>
<div class="t" style="left:199.00px;top:379.70px;font-size:17.48px;color:#111;transform-origin:0 60px;transform:scale(0.25);font-family:'Liberation Serif',serif;font-weight:700;letter-spacing:0.348px;-webkit-text-stroke:0.348px;">Second level</div>
<div class="t" style="left:195.84px;top:379.87px;font-size:17.48px;color:#111;transform-origin:0 60px;transform:scale(0.25);font-family:'Liberation Serif',serif;font-weight:700;-webkit-text-stroke:0.600px;">•</div>
<div class="t" style="left:204.80px;top:384.50px;font-size:17.20px;color:#222;transform-origin:0 60px;transform:scale(0.25);font-family:'Liberation Serif',serif;font-weight:400;letter-spacing:-0.354px;-webkit-text-stroke:0.480px;">Third level</div>
<div class="t" style="left:201.45px;top:384.67px;font-size:17.20px;color:#222;transform-origin:0 60px;transform:scale(0.25);font-family:'Liberation Serif',serif;font-weight:400;-webkit-text-stroke:0.600px;">•</div>
<div class="t" style="left:210.10px;top:389.00px;font-size:17.20px;color:#333;transform-origin:0 60px;transform:scale(0.25);font-family:'Liberation Serif',serif;font-weight:400;letter-spacing:-1.418px;-webkit-text-stroke:0.480px;">Fourth level</div>
<div class="t" style="left:207.05px;top:389.17px;font-size:17.20px;color:#333;transform-origin:0 60px;transform:scale(0.25);font-family:'Liberation Serif',serif;font-weight:400;-webkit-text-stroke:0.600px;">•</div>
<div class="t" style="left:215.90px;top:392.90px;font-size:17.20px;color:#333;transform-origin:0 60px;transform:scale(0.25);font-family:'Liberation Serif',serif;font-weight:400;letter-spacing:-1.478px;-webkit-text-stroke:0.480px;">Fifth level</div>
<div class="t" style="left:212.85px;top:393.07px;font-size:17.20px;color:#333;transform-origin:0 60px;transform:scale(0.25);font-family:'Liberation Serif',serif;font-weight:400;-webkit-text-stroke:0.600px;">•</div>
<div class="a" style="left:246.00px;top:436.40px;width:2.80px;height:2.80px;border:0.6px solid #e3e6e8;border-radius:0.6px;"></div>
<div class="a" style="left:250.20px;top:436.40px;width:2.80px;height:2.80px;border:0.6px solid #e3e6e8;border-radius:0.6px;"></div>
<div class="a" style="left:254.40px;top:436.40px;width:2.80px;height:2.80px;border:0.6px solid #e3e6e8;border-radius:0.6px;"></div>
<div class="a" style="left:258.60px;top:436.40px;width:2.80px;height:2.80px;border:0.6px solid #e3e6e8;border-radius:0.6px;"></div>
<div class="a" style="left:246.00px;top:440.60px;width:2.80px;height:2.80px;border:0.6px solid #e3e6e8;border-radius:0.6px;"></div>
<div class="a" style="left:250.20px;top:440.60px;width:2.80px;height:2.80px;border:0.6px solid #e3e6e8;border-radius:0.6px;"></div>
<div class="a" style="left:254.40px;top:440.60px;width:2.80px;height:2.80px;border:0.6px solid #e3e6e8;border-radius:0.6px;"></div>
<div class="a" style="left:258.60px;top:440.60px;width:2.80px;height:2.80px;border:0.6px solid #e3e6e8;border-radius:0.6px;"></div>
<div class="a" style="left:177.90px;top:462.30px;width:151.40px;height:85.60px;background:#fff;border-radius:3.5px;box-shadow:0 0 0 0.5px rgba(0,0,0,.07),0 0.5px 1.2px rgba(0,0,0,.10);"></div>
<svg class="a" style="left:177px;top:462px;" width="153" height="87" viewBox="0 0 153 87" fill="none"><g transform="translate(0.90 0.30)"><path d="M3.5 0 H89 L66.7 85.6 H3.5 A3.5 3.5 0 0 1 0 82.1 V3.5 A3.5 3.5 0 0 1 3.5 0 Z" fill="#cbd6d6"/></g></svg>
<div class="a" style="left:188.20px;top:466.50px;width:131.00px;height:18.80px;border:1px dotted rgba(225,228,228,.5);"></div>
<div class="a" style="left:188.20px;top:490.50px;width:62.00px;height:48.00px;border:1px dotted rgba(240,244,244,.35);"></div>
<div class="a" style="left:254.00px;top:490.50px;width:65.10px;height:48.00px;border:1px dotted #ededed;"></div>
<div class="t" style="left:189.70px;top:422.00px;font-size:8.83px;color:#1a1a1a;font-family:'Liberation Serif',serif;font-weight:400;letter-spacing:0.141px;-webkit-text-stroke:0.320px;">Click to edit Master title style</div>
<div class="t" style="left:193.00px;top:429.50px;font-size:17.20px;color:#1c1c1c;transform-origin:0 60px;transform:scale(0.25);font-family:'Liberation Serif',serif;font-weight:700;letter-spacing:0.306px;-webkit-text-stroke:0.240px;">Edit Master text styles</div>
<div class="t" style="left:189.95px;top:429.67px;font-size:17.20px;color:#1c1c1c;transform-origin:0 60px;transform:scale(0.25);font-family:'Liberation Serif',serif;font-weight:700;-webkit-text-stroke:0.600px;">•</div>
<div class="t" style="left:198.60px;top:434.70px;font-size:17.20px;color:#1c1c1c;transform-origin:0 60px;transform:scale(0.25);font-family:'Liberation Serif',serif;font-weight:700;letter-spacing:-0.754px;-webkit-text-stroke:0.240px;">Second level</div>
<div class="t" style="left:195.35px;top:434.87px;font-size:17.20px;color:#1c1c1c;transform-origin:0 60px;transform:scale(0.25);font-family:'Liberation Serif',serif;font-weight:700;-webkit-text-stroke:0.600px;">•</div>
<div class="t" style="left:203.90px;top:439.30px;font-size:17.20px;color:#2a2a2a;transform-origin:0 60px;transform:scale(0.25);font-family:'Liberation Serif',serif;font-weight:400;letter-spacing:-1.514px;-webkit-text-stroke:0.480px;">Third level</div>
<div class="t" style="left:201.05px;top:439.47px;font-size:17.20px;color:#2a2a2a;transform-origin:0 60px;transform:scale(0.25);font-family:'Liberation Serif',serif;font-weight:400;-webkit-text-stroke:0.600px;">•</div>
<div class="t" style="left:210.10px;top:443.00px;font-size:17.20px;color:#3a3a3a;transform-origin:0 60px;transform:scale(0.25);font-family:'Liberation Serif',serif;font-weight:400;letter-spacing:-2.291px;-webkit-text-stroke:0.480px;">Fourth level</div>
<div class="t" style="left:206.85px;top:443.17px;font-size:17.20px;color:#3a3a3a;transform-origin:0 60px;transform:scale(0.25);font-family:'Liberation Serif',serif;font-weight:400;-webkit-text-stroke:0.600px;">•</div>
<div class="t" style="left:215.30px;top:446.60px;font-size:17.20px;color:#3a3a3a;transform-origin:0 60px;transform:scale(0.25);font-family:'Liberation Serif',serif;font-weight:400;letter-spacing:-2.078px;-webkit-text-stroke:0.480px;">Fifth level</div>
<div class="t" style="left:212.45px;top:446.77px;font-size:17.20px;color:#3a3a3a;transform-origin:0 60px;transform:scale(0.25);font-family:'Liberation Serif',serif;font-weight:400;-webkit-text-stroke:0.600px;">•</div>
<div class="t" style="left:259.00px;top:429.50px;font-size:17.20px;color:#1c1c1c;transform-origin:0 60px;transform:scale(0.25);font-family:'Liberation Serif',serif;font-weight:700;letter-spacing:0.306px;-webkit-text-stroke:0.240px;">Edit Master text styles</div>
<div class="t" style="left:255.95px;top:429.67px;font-size:17.20px;color:#1c1c1c;transform-origin:0 60px;transform:scale(0.25);font-family:'Liberation Serif',serif;font-weight:700;-webkit-text-stroke:0.600px;">•</div>
<div class="t" style="left:264.60px;top:434.70px;font-size:17.20px;color:#1c1c1c;transform-origin:0 60px;transform:scale(0.25);font-family:'Liberation Serif',serif;font-weight:700;letter-spacing:-0.754px;-webkit-text-stroke:0.240px;">Second level</div>
<div class="t" style="left:261.35px;top:434.87px;font-size:17.20px;color:#1c1c1c;transform-origin:0 60px;transform:scale(0.25);font-family:'Liberation Serif',serif;font-weight:700;-webkit-text-stroke:0.600px;">•</div>
<div class="t" style="left:269.90px;top:439.30px;font-size:17.20px;color:#2a2a2a;transform-origin:0 60px;transform:scale(0.25);font-family:'Liberation Serif',serif;font-weight:400;letter-spacing:-1.514px;-webkit-text-stroke:0.480px;">Third level</div>
<div class="t" style="left:267.05px;top:439.47px;font-size:17.20px;color:#2a2a2a;transform-origin:0 60px;transform:scale(0.25);font-family:'Liberation Serif',serif;font-weight:400;-webkit-text-stroke:0.600px;">•</div>
<div class="t" style="left:276.10px;top:443.00px;font-size:17.20px;color:#3a3a3a;transform-origin:0 60px;transform:scale(0.25);font-family:'Liberation Serif',serif;font-weight:400;letter-spacing:-2.291px;-webkit-text-stroke:0.480px;">Fourth level</div>
<div class="t" style="left:272.85px;top:443.17px;font-size:17.20px;color:#3a3a3a;transform-origin:0 60px;transform:scale(0.25);font-family:'Liberation Serif',serif;font-weight:400;-webkit-text-stroke:0.600px;">•</div>
<div class="t" style="left:281.30px;top:446.60px;font-size:17.20px;color:#3a3a3a;transform-origin:0 60px;transform:scale(0.25);font-family:'Liberation Serif',serif;font-weight:400;letter-spacing:-2.078px;-webkit-text-stroke:0.480px;">Fifth level</div>
<div class="t" style="left:278.45px;top:446.77px;font-size:17.20px;color:#3a3a3a;transform-origin:0 60px;transform:scale(0.25);font-family:'Liberation Serif',serif;font-weight:400;-webkit-text-stroke:0.600px;">•</div>
<div class="a" style="left:212.40px;top:508.60px;width:2.80px;height:2.80px;border:0.6px solid #dbe3e3;border-radius:0.6px;"></div>
<div class="a" style="left:216.60px;top:508.60px;width:2.80px;height:2.80px;border:0.6px solid #dbe3e3;border-radius:0.6px;"></div>
<div class="a" style="left:220.80px;top:508.60px;width:2.80px;height:2.80px;border:0.6px solid #dbe3e3;border-radius:0.6px;"></div>
<div class="a" style="left:225.00px;top:508.60px;width:2.80px;height:2.80px;border:0.6px solid #dbe3e3;border-radius:0.6px;"></div>
<div class="a" style="left:212.40px;top:512.80px;width:2.80px;height:2.80px;border:0.6px solid #dbe3e3;border-radius:0.6px;"></div>
<div class="a" style="left:216.60px;top:512.80px;width:2.80px;height:2.80px;border:0.6px solid #dbe3e3;border-radius:0.6px;"></div>
<div class="a" style="left:220.80px;top:512.80px;width:2.80px;height:2.80px;border:0.6px solid #dbe3e3;border-radius:0.6px;"></div>
<div class="a" style="left:225.00px;top:512.80px;width:2.80px;height:2.80px;border:0.6px solid #dbe3e3;border-radius:0.6px;"></div>
<div class="a" style="left:278.80px;top:508.60px;width:2.80px;height:2.80px;border:0.6px solid #e3e6e8;border-radius:0.6px;"></div>
<div class="a" style="left:283.00px;top:508.60px;width:2.80px;height:2.80px;border:0.6px solid #e3e6e8;border-radius:0.6px;"></div>
<div class="a" style="left:287.20px;top:508.60px;width:2.80px;height:2.80px;border:0.6px solid #e3e6e8;border-radius:0.6px;"></div>
<div class="a" style="left:291.40px;top:508.60px;width:2.80px;height:2.80px;border:0.6px solid #e3e6e8;border-radius:0.6px;"></div>
<div class="a" style="left:278.80px;top:512.80px;width:2.80px;height:2.80px;border:0.6px solid #e3e6e8;border-radius:0.6px;"></div>
<div class="a" style="left:283.00px;top:512.80px;width:2.80px;height:2.80px;border:0.6px solid #e3e6e8;border-radius:0.6px;"></div>
<div class="a" style="left:287.20px;top:512.80px;width:2.80px;height:2.80px;border:0.6px solid #e3e6e8;border-radius:0.6px;"></div>
<div class="a" style="left:291.40px;top:512.80px;width:2.80px;height:2.80px;border:0.6px solid #e3e6e8;border-radius:0.6px;"></div>
<div class="t" style="left:189.70px;top:485.00px;font-size:12.80px;color:#333;transform-origin:0 60px;transform:scale(0.25);letter-spacing:-2.032px;-webkit-text-stroke:0.400px;">9/3/2025</div>
<div class="t" style="left:229.50px;top:485.00px;font-size:12.80px;color:#333;transform-origin:0 60px;transform:scale(0.25);letter-spacing:-1.559px;-webkit-text-stroke:0.400px;">Footer</div>
<div class="t" style="left:287.40px;top:485.00px;font-size:12.00px;color:#555;transform-origin:0 60px;transform:scale(0.25);-webkit-text-stroke:0.528px;">#</div>
<div class="a" style="left:177.90px;top:553.60px;width:151.40px;height:40.00px;background:#fff;border-radius:3.5px;box-shadow:0 0 0 0.5px rgba(0,0,0,.07),0 0.5px 1.2px rgba(0,0,0,.10);"></div>
<svg class="a" style="left:296px;top:553px;" width="35" height="23" viewBox="0 0 35 23" fill="none"><g transform="translate(0.00 0.60)"><path d="M5.5 22 C9 13 18 6.5 33.5 5.6" stroke="#e3e3e3" stroke-width="0.9"/></g></svg>
<div class="a" style="left:186.00px;top:571.80px;width:130.60px;height:0.80px;background:#e4e4e4;"></div>
<div class="a" style="left:98.60px;top:572.60px;width:940.00px;height:1.00px;background:#d8d8d8;"></div>
<div class="a" style="left:98.60px;top:573.60px;width:940.00px;height:3.00px;background:#f1f1f1;"></div>
<div class="t" style="left:436.70px;top:17.60px;font-size:19.20px;color:#fff;transform-origin:0 60px;transform:scale(0.25);font-family:'Liberation Sans',sans-serif;font-weight:700;-webkit-text-stroke:0.000px;">P</div>
</div></div>
</body>
</html>
